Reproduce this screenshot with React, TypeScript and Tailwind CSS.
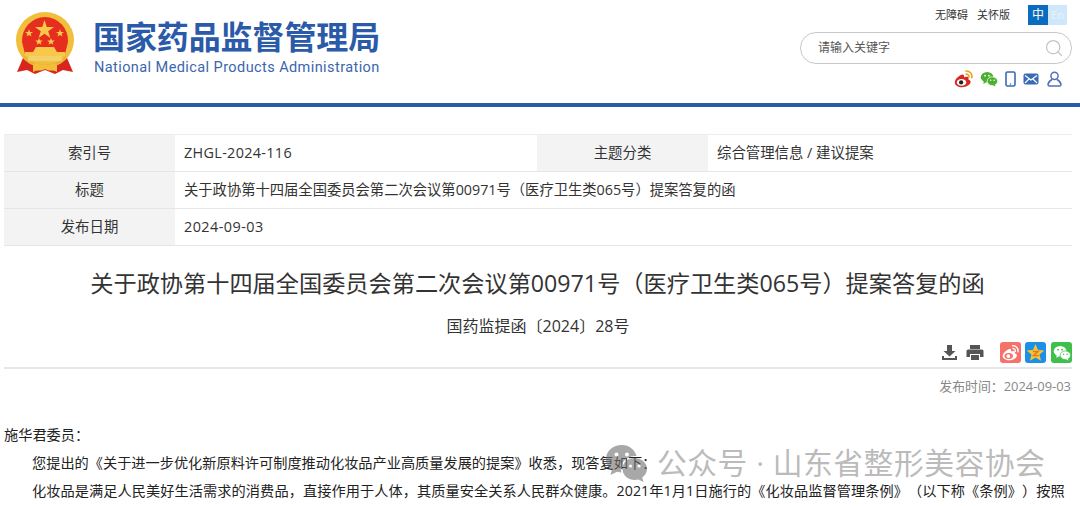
import { Search } from "lucide-react";

// National emblem, simplified
function Emblem() {
  return (
    <svg width="60" height="64" viewBox="0 0 60 64">
      <path d="M8 46 L2 60 L12 58 L20 62 L30 58 L40 62 L48 58 L58 60 L52 46 Z" fill="#d8251d" />
      <ellipse cx="30" cy="28" rx="29" ry="28" fill="#f2bf3c" />
      <path d="M30 5 A23.500 23.500 0 0 1 53 30 L50 42 H10 L7 30 A23.500 23.500 0 0 1 30 5 Z" fill="#e62e1e" />
      <polygon points="29.500,8 31.800,15 39,15 33.200,19.200 35.400,26 29.500,21.800 23.600,26 25.800,19.200 20,15 27.200,15" fill="#f7c84a" />
      <polygon points="14,17 15,20 18,20 15.600,21.800 16.500,24.600 14,23 11.500,24.600 12.400,21.800 10,20 13,20" fill="#f7c84a" />
      <polygon points="45,17 46,20 49,20 46.600,21.800 47.500,24.600 45,23 42.500,24.600 43.400,21.800 41,20 44,20" fill="#f7c84a" />
      <polygon points="24,26 25,28.500 27.800,28.500 25.600,30.200 26.400,32.800 24,31.300 21.600,32.800 22.400,30.200 20.200,28.500 23,28.500" fill="#f7c84a" />
      <polygon points="36,26 37,28.500 39.800,28.500 37.600,30.200 38.400,32.800 36,31.300 33.600,32.800 34.400,30.200 32.200,28.500 35,28.500" fill="#f7c84a" />
      <path d="M18 40 L21 35 H39 L42 40 Z" fill="#f7c84a" />
      <rect x="10" y="40" width="40" height="4" fill="#f7c84a" />
      <path d="M8 42 C14 50 22 52 30 52 C38 52 46 50 52 42 L50 48 C44 54 36 55 30 55 C24 55 16 54 10 48 Z" fill="#eab236" />
      <rect x="13" y="44" width="34" height="5" fill="#f3d069" />
      <path d="M18 53 C22 49 26 55 30 52 C34 55 38 49 42 53 L42 60 C38 57 34 60 30 57 C26 60 22 57 18 60 Z" fill="#f2bf3c" />
    </svg>
  );
}

function WeiboIcon({ size = 20, color = "#d9281e", wave = "#f0a020", eye = "#222", face = "#fff" }: { size?: number; color?: string; wave?: string; eye?: string; face?: string }) {
  return (
    <svg width={size} height={size} viewBox="0 0 24 24">
      <path d="M10.500 7C5.800 8.500 1 13 1 17 1 20.500 5.600 23 10 23c5.500 0 11-3.200 11-6.800 0-1.900-1.700-2.700-2.900-3 .5-1.300.4-2.600-.5-3.100-1.400-.8-3.700 0-4.700.4.200-1.800-.6-4.200-2.400-3.500z" fill={color} />
      <ellipse cx="9.500" cy="17" rx="6" ry="4.300" fill={face} />
      <circle cx="9" cy="17" r="2.700" fill={eye} />
      <path d="M15 2.500a7 7 0 0 1 7.500 8.500M15.500 6.500a3.200 3.200 0 0 1 3.300 3.800" fill="none" stroke={wave} strokeWidth="2" strokeLinecap="round" />
    </svg>
  );
}

function WechatIcon({ size = 20, color = "#4caf2f", eye = "#fff" }: { size?: number; color?: string; eye?: string }) {
  return (
    <svg width={size} height={size} viewBox="0 0 24 24">
      <ellipse cx="9.500" cy="9.500" rx="8.500" ry="7" fill={color} />
      <path d="M5 14.500 L4.500 18.500 L9 15.500 Z" fill={color} />
      <ellipse cx="16.500" cy="15" rx="7" ry="5.800" fill={color} stroke={eye} strokeWidth="1" />
      <path d="M20 19 L20.500 22 L17 20 Z" fill={color} />
      <circle cx="6.800" cy="7.500" r="1.200" fill={eye} />
      <circle cx="12" cy="7.500" r="1.200" fill={eye} />
      <circle cx="14.200" cy="13.800" r="1" fill={eye} />
      <circle cx="18.800" cy="13.800" r="1" fill={eye} />
    </svg>
  );
}

function Header() {
  return (
    <header className="flex h-[103px] items-start justify-between pl-[15px] pr-[8px]">
      <div className="flex items-start pt-[12px]">
        <Emblem />
        <div className="ml-[18px] flex flex-col">
          <div className="h-[47px] whitespace-nowrap pt-[3px] text-[32px] font-bold leading-[44px] tracking-[-0.1px] text-[#2b5ba8]">国家药品监督管理局</div>
          <div className="whitespace-nowrap pl-[1px] font-['Roboto'] text-[14.500px] leading-[18px] tracking-[0.42px] text-[#3a66ad]">National Medical Products Administration</div>
        </div>
      </div>
      <div className="flex w-[275px] flex-col items-end">
        <div className="mt-[5px] flex h-[20px] items-center pr-[5px] text-[11px] text-[#333]">
          <span>无障碍</span>
          <span className="ml-[9px]">关怀版</span>
          <span className="ml-[18px] flex h-[20px] w-[20px] items-center justify-center bg-[#0a6cbd] text-[12px] text-white">中</span>
          <span className="flex h-[20px] w-[19px] items-center justify-center bg-[#cfe7fb] text-[11px] text-[#e8f4fe]">En</span>
        </div>
        <div className="mt-[7px] flex h-[32px] w-[272px] items-center justify-between rounded-full border border-[#c9c9c9] pl-[17px] pr-[7px] text-[12px] text-[#555]">
          <span>请输入关键字</span>
          <Search size={20} strokeWidth={1.500} className="text-[#c4c4c4]" />
        </div>
        <div className="mt-[5px] flex items-center pr-[10px]">
          <WeiboIcon size={19} />
          <span className="ml-[7px]"><WechatIcon size={18} /></span>
          <svg className="ml-[7px]" width="11" height="16" viewBox="0 0 11 16">
            <rect x="1" y="1" width="9" height="14" rx="1.500" fill="none" stroke="#3a6bb5" strokeWidth="1.600" />
            <circle cx="5.500" cy="13" r="0.800" fill="#3a6bb5" />
          </svg>
          <svg className="ml-[7px]" width="16" height="12" viewBox="0 0 16 12">
            <rect x="0.500" y="0.500" width="15" height="11" rx="2" fill="#3a6bb5" />
            <path d="M2 2.500 L8 7 L14 2.500 M2 10 L6 6 M14 10 L10 6" fill="none" stroke="#fff" strokeWidth="1.200" />
          </svg>
          <svg className="ml-[8px]" width="15" height="16" viewBox="0 0 15 16">
            <circle cx="7.500" cy="4.800" r="3.600" fill="none" stroke="#5470b8" strokeWidth="1.500" />
            <path d="M5 8.500C2.500 10 1 11.500 1 13.500 1 14.500 1.500 15 2.500 15H12.500C13.500 15 14 14.500 14 13.500 14 11.500 12.500 10 10 8.500" fill="none" stroke="#5470b8" strokeWidth="1.500" />
          </svg>
        </div>
      </div>
    </header>
  );
}

function InfoTable() {
  const labelCell = "flex items-center justify-center bg-[#f3f3f3]";
  const valueCell = "flex items-center bg-white pl-[9px]";
  return (
    <div className="mx-[4px] mt-[27px] w-[1068px] border-t border-[#ececec] text-[14.400px] text-[#333]">
      <div className="grid h-[37px] grid-cols-[171px_362px_171px_364px] border-b border-[#e6e6e6]">
        <div className={labelCell}>索引号</div>
        <div className={valueCell}><span className="tracking-[0.33px]">ZHGL-2024-116</span></div>
        <div className={labelCell}>主题分类</div>
        <div className={valueCell}>综合管理信息 / 建议提案</div>
      </div>
      <div className="grid h-[37px] grid-cols-[171px_897px] border-b border-[#e6e6e6]">
        <div className={labelCell}>标题</div>
        <div className={`${valueCell} text-[14.300px]`}>关于政协第十四届全国委员会第二次会议第00971号（医疗卫生类065号）提案答复的函</div>
      </div>
      <div className="grid h-[37px] grid-cols-[171px_897px] border-b border-[#e6e6e6]">
        <div className={labelCell}>发布日期</div>
        <div className={valueCell}><span className="tracking-[0.45px]">2024-09-03</span></div>
      </div>
    </div>
  );
}

function Toolbar() {
  return (
    <div className="ml-[4px] mr-[8px] mt-[6px] flex h-[27px] items-start justify-end border-b-2 border-[#e6e6e6]">
      <svg className="mt-[2px]" width="17" height="17" viewBox="0 0 17 17">
        <path d="M6 1H11V7H14.500L8.500 12.500 2.500 7H6Z" fill="#555" />
        <path d="M1 12V16H16V12H14V14H3V12Z" fill="#555" />
      </svg>
      <svg className="ml-[8px] mt-[2px]" width="18" height="17" viewBox="0 0 18 17">
        <path d="M4 1H14V5H4Z" fill="#555" />
        <path d="M2 5.500H16A1.500 1.500 0 0 1 17.500 7V13H14V10H4V13H.5V7A1.500 1.500 0 0 1 2 5.500Z" fill="#555" />
        <path d="M5 11H13V16H5Z" fill="#555" />
      </svg>
      <span className="ml-[16px] flex h-[21px] w-[21px] items-center justify-center rounded-[3px] bg-[#f4726a]">
        <WeiboIcon size={17} color="#fff" wave="#fff" face="#f4726a" eye="#fff" />
      </span>
      <span className="ml-[4px] flex h-[21px] w-[21px] items-center justify-center rounded-[3px] bg-[#1c8fe6]">
        <svg width="19" height="19" viewBox="0 0 18 18">
          <polygon points="9,1 11.400,6.600 17.400,7.100 12.800,11 14.200,16.900 9,13.800 3.800,16.900 5.200,11 .6,7.100 6.600,6.600" fill="#f7c42c" />
          <path d="M6.500 8H11.500L7 12H12" fill="none" stroke="#e8732a" strokeWidth="1.300" />
        </svg>
      </span>
      <span className="ml-[5px] flex h-[21px] w-[21px] items-center justify-center rounded-[3px] bg-[#3fc04a]">
        <WechatIcon size={18} color="#fff" eye="#3fc04a" />
      </span>
    </div>
  );
}

export default function App() {
  return (
    <div className="relative h-[506px] w-[1080px] overflow-hidden bg-white font-['Open_Sans','Noto_Sans_CJK_SC',sans-serif] [text-spacing-trim:space-all]">
      <Header />
      <div className="h-[4px] bg-[#2b5ba8]" />
      <InfoTable />
      <h1 className="mt-[20px] pr-[5px] text-center text-[23.200px] leading-[34px] text-[#333]">
        关于政协第十四届全国委员会第二次会议第00971号（医疗卫生类065号）提案答复的函
      </h1>
      <p className="mt-[16px] pr-[4px] text-center text-[16px] leading-[20px] text-[#333]">国药监提函〔2024〕28号</p>
      <Toolbar />
      <div className="mt-[7px] pr-[9px] text-right text-[12.900px] leading-[20px] text-[#888]">发布时间：2024-09-03</div>
      <div className="mt-[25px] px-[4px] text-[14.200px] leading-[28px] text-[#222]">
        <p>施华君委员：</p>
        <p className="whitespace-nowrap indent-[28px]">您提出的《关于进一步优化新原料许可制度推动化妆品产业高质量发展的提案》收悉，现答复如下：</p>
        <p className="whitespace-nowrap indent-[28px] tracking-[0.07px]">化妆品是满足人民美好生活需求的消费品，直接作用于人体，其质量安全关系人民群众健康。2021年1月1日施行的《化妆品监督管理条例》（以下称《条例》）按照</p>
      </div>
      {/* Watermark over the article */}
      <div className="absolute left-[606px] top-[445px] flex h-[36px] items-center text-[29.800px] leading-[34px] tracking-[0.5px] text-[#a8a8a8]/80">
        <svg width="41" height="37" viewBox="0 0 41 37" className="absolute left-0 top-0 opacity-60">
          <path d="M16 0C7 0 0 6 0 14c0 4.500 2.500 8 6 10.500L4.500 30 11 26.800c1.500.4 3 .6 4.500.6-.4-1.200-.6-2.400-.6-3.700C15 16.500 21.500 11 29 11c.6 0 1 0 1.500.1C29 4.800 23 0 16 0Z" fill="#707070" />
          <path d="M41 24c0-6.500-6-11-12.500-11S16.500 17.500 16.500 24s6 11 12 11c1.300 0 2.600-.2 3.800-.5L37.500 37l-1.300-4.500C39 30.500 41 27.500 41 24Z" fill="#707070" />
          <circle cx="10.500" cy="9.500" r="2" fill="#fff" />
          <circle cx="21" cy="9.500" r="2" fill="#fff" />
          <circle cx="24.500" cy="21" r="1.600" fill="#fff" />
          <circle cx="33" cy="21" r="1.600" fill="#fff" />
        </svg>
        <span className="relative ml-[51px] whitespace-nowrap">公众号 · 山东省整形美容协会</span>
      </div>
    </div>
  );
}
